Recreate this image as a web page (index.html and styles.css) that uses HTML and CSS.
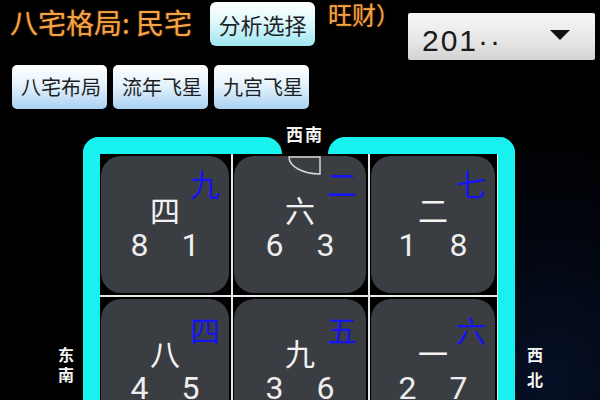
FILE: index.html
```html
<!DOCTYPE html>
<html lang="zh-CN">
<head>
<meta charset="utf-8">
<title>八宅格局</title>
<link rel="stylesheet" href="styles.css">
</head>
<body>
<div class="top">
  <div class="title">八宅格局: 民宅</div>
  <div class="btn-analyze">分析选择</div>
  <div class="wang">旺财）</div>
  <div class="select"><span class="sel-text">201··</span><span class="caret"></span></div>
</div>
<div class="tabs">
  <div class="tab">八宅布局</div>
  <div class="tab">流年飞星</div>
  <div class="tab">九宫飞星</div>
</div>
<div class="board">
  <div class="frame">
    <svg class="notch" width="80" height="17" viewBox="0 0 80 17"><path d="M0,0 L80,0 A17,17 0 0 0 63,17 L17,17 A17,17 0 0 0 0,0 Z" fill="#000"/></svg>
    <div class="grid">
      <div class="cell"><div class="tile"><span class="star">九</span><div class="main">四</div><div class="nums"><span>8</span><span>1</span></div></div></div>
      <div class="cell"><div class="tile">
        <svg class="arc" width="36" height="20" viewBox="0 0 36 20"><path d="M2,1 H33 V18 A31,17 0 0 1 2,1 Z" fill="none" stroke="#d6d6d6" stroke-width="1.5"/></svg>
        <span class="star">二</span><div class="main">六</div><div class="nums"><span>6</span><span>3</span></div></div></div>
      <div class="cell"><div class="tile"><span class="star">七</span><div class="main">二</div><div class="nums"><span>1</span><span>8</span></div></div></div>
      <div class="cell"><div class="tile"><span class="star low">四</span><div class="main">八</div><div class="nums"><span>4</span><span>5</span></div></div></div>
      <div class="cell"><div class="tile"><span class="star low">五</span><div class="main">九</div><div class="nums"><span>3</span><span>6</span></div></div></div>
      <div class="cell"><div class="tile"><span class="star low">六</span><div class="main">一</div><div class="nums"><span>2</span><span>7</span></div></div></div>
    </div>
  </div>
  <span class="dir dir-sw">西南</span>
  <span class="dir dir-v dir-se">东南</span>
  <span class="dir dir-v dir-nw">西北</span>
</div>
</body>
</html>
```
FILE: styles.css
```css
html, body {
  margin: 0;
  padding: 0;
}
body {
  width: 600px;
  height: 400px;
  overflow: hidden;
  background: radial-gradient(ellipse 220px 260px at 92% 95%, #061026 0%, #02050d 60%, #000 100%), #000;
  font-family: "Noto Sans CJK SC", "Noto Sans", sans-serif;
}
.top {
  display: flex;
  align-items: flex-start;
  height: 60px;
}
.title {
  width: 200px;
  margin-left: 10px;
  margin-top: 8px;
  font-size: 28px;
  line-height: 28px;
  color: #f3a546;
  text-shadow: 0 0 2px rgba(255, 120, 20, 0.6);
  white-space: nowrap;
}
.btn-analyze {
  width: 105px;
  height: 44px;
  margin-top: 2px;
  border-radius: 6px;
  background: linear-gradient(#ffffff 0%, #e4f9fc 40%, #9fe6f0 100%);
  color: #1d2428;
  font-size: 22px;
  line-height: 44px;
  text-align: center;
  box-sizing: border-box;
}
.wang {
  margin-left: 13px;
  margin-top: 1px;
  font-size: 24px;
  line-height: 26px;
  color: #f3a546;
  text-shadow: 0 0 2px rgba(255, 120, 20, 0.6);
}
.select {
  margin-left: 8px;
  margin-top: 13px;
  width: 187px;
  height: 47px;
  box-sizing: border-box;
  border-radius: 2px;
  background: linear-gradient(#f7f7f7 0%, #e6e6e6 60%, #d2d2d2 100%);
  display: flex;
  align-items: center;
  justify-content: space-between;
  padding: 0 25px 0 14px;
}
.sel-text {
  font-family: "Liberation Sans", Arial, sans-serif;
  font-size: 30px;
  line-height: 30px;
  margin-top: 8px;
  color: #1a1a1a;
  letter-spacing: 2px;
}
.caret {
  width: 0;
  height: 0;
  border-left: 10px solid transparent;
  border-right: 10px solid transparent;
  border-top: 10px solid #111;
  margin-top: -4px;
}
.tabs {
  display: flex;
  gap: 6px;
  margin-top: 5px;
  padding-left: 12px;
}
.tab {
  width: 95px;
  height: 44px;
  box-sizing: border-box;
  border-radius: 5px;
  background: linear-gradient(#ffffff 0%, #e6f2fc 45%, #a9d2f2 100%);
  color: #1b1f24;
  font-size: 20px;
  line-height: 44px;
  padding-left: 9px;
  white-space: nowrap;
}
.board {
  position: relative;
  margin-left: 83px;
  margin-top: 28px;
  width: 432px;
}
.frame {
  position: relative;
  border: 17px solid #17f2ee;
  border-bottom: none;
  border-radius: 16px 16px 0 0;
  background: #000;
}
.notch {
  position: absolute;
  left: 165px;
  top: -17px;
  display: block;
}
.grid {
  display: grid;
  grid-template-columns: 131px 135px 127px;
  grid-template-rows: 141px 141px;
  gap: 2px;
  background: #e8e8e8;
}
.cell {
  background: #000;
  display: flex;
}
.tile {
  position: relative;
  flex: 1;
  margin: 2px 2px 2px 1px;
  border-radius: 20px;
  background: #3a3d42;
  display: flex;
  flex-direction: column;
  align-items: center;
  padding-top: 38px;
  box-sizing: border-box;
}
.main {
  font-size: 30px;
  line-height: 30px;
  color: #f2f2f2;
}
.nums {
  display: flex;
  gap: 33px;
  margin-top: 5px;
  font-family: Roboto, "Liberation Sans", sans-serif;
  font-size: 32px;
  line-height: 32px;
  color: #eeeeee;
}
.star {
  position: absolute;
  top: 12px;
  right: 9px;
  font-size: 30px;
  line-height: 30px;
  color: #1414f2;
}
.star.low {
  top: 15px;
}
.arc {
  position: absolute;
  left: 53px;
  top: 0;
}
.dir {
  position: absolute;
  color: #f4f4f4;
  font-size: 16px;
  font-weight: bold;
  line-height: 20px;
  z-index: 2;
}
.dir-sw {
  left: 203px;
  top: -13px;
  font-size: 17px;
  letter-spacing: 2px;
}
.dir-v {
  writing-mode: vertical-rl;
  line-height: 17px;
  letter-spacing: 4px;
}
.dir-se {
  left: -26px;
  top: 210px;
}
.dir-nw {
  left: 443px;
  top: 210px;
  letter-spacing: 9px;
}
```
